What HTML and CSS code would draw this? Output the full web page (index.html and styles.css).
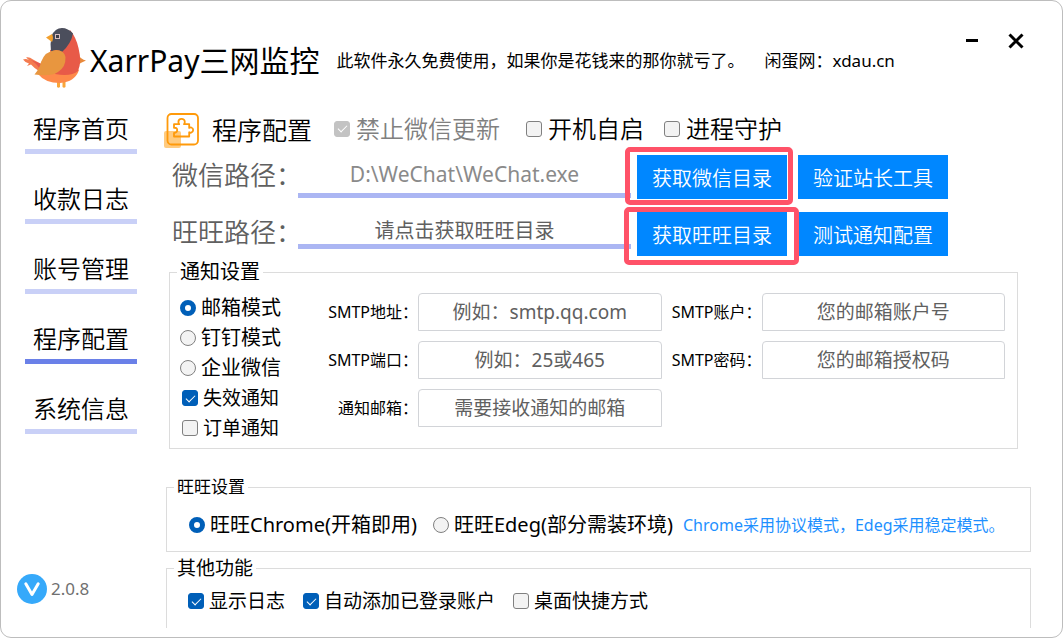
FILE: index.html
```html
<!DOCTYPE html>
<html lang="zh-CN">
<head>
<meta charset="utf-8">
<meta name="viewport" content="width=device-width, initial-scale=1">
<title>XarrPay三网监控</title>
<link rel="stylesheet" href="styles.css">
</head>
<body>
<div class="window">
  <header class="header">
    <svg class="logo" viewBox="0 0 64 70" aria-hidden="true">
      <path fill="#f9a63a" d="M34 54h3v7q-1.500 1.500-3 0zM39.500 54h3v7q-1.500 1.500-3 0z"/>
      <path fill="#f47b4f" d="M0 33.500Q3 32.500 6 34L3 31.500Q6 30.500 10 33.500L20 39L16 45Q11 42 8 38.500L4 40L6 37.500Q2 36.500 0 33.500z"/>
      <path fill="#e65a4d" d="M8 34L20 38.500L17 43Q13 37 8 34z"/>
      <path fill="#e88a3c" d="M54 27Q58 34 63 34.500Q58 36 54 40.500z"/>
      <path fill="#fe8a4a" d="M15 48Q22 57 37 57Q52 56 56 44L50 40z"/>
      <path fill="#e85a48" d="M47 4Q53 11 55.500 22Q59 36 55 45Q48 51 32 48L27 24Q39 23 47 4z"/>
      <path fill="#4b4e5c" d="M28 26Q27 17 28.500 10Q32 2 39 2Q45 2 50 7.500Q48 18 39 26Q33 22 28 26z"/>
      <path fill="#f2a02e" d="M29 8L23 11.500L29 16Q31 12 29 8z"/>
      <path fill="#e8963f" d="M11.500 48.500Q17 42 18 36Q22 25 33 24Q41 24 42.500 31Q43 41 35 46Q28 51 11.500 48.500z"/>
      <rect x="32.500" y="8.500" width="4" height="4" fill="#3b3c46" stroke="#d8bfc2" stroke-width="1"/>
    </svg>
    <h1 class="title">XarrPay三网监控</h1>
    <p class="notice"><span>此软件永久免费使用，如果你是花钱来的那你就亏了。</span><span>闲蛋网：xdau.cn</span></p>
    <div class="controls">
      <button class="control" type="button" aria-label="最小化"><svg viewBox="0 0 16 16"><path d="M2 7.500h12"/></svg></button>
      <button class="control" type="button" aria-label="关闭"><svg viewBox="0 0 16 16"><path d="M1.500 1.500l13 13M14.500 1.500l-13 13"/></svg></button>
    </div>
  </header>

  <div class="body">
    <aside class="sidebar">
      <nav class="nav">
        <a class="nav-link" href="#home">程序首页</a>
        <a class="nav-link" href="#logs">收款日志</a>
        <a class="nav-link" href="#accounts">账号管理</a>
        <a class="nav-link nav-link-active" href="#config">程序配置</a>
        <a class="nav-link" href="#info">系统信息</a>
      </nav>
      <div class="version">
        <svg class="version-icon" viewBox="0 0 30 30" aria-hidden="true"><circle cx="15" cy="15" r="15" fill="#36a9fa"/><path d="M8.800 9.800L15 20.500l6.200-10.700" fill="none" stroke="#fff" stroke-width="3" stroke-linecap="round" stroke-linejoin="round"/></svg>
        <span>2.0.8</span>
      </div>
    </aside>

    <main class="main">
      <div class="toolbar">
        <svg class="plugin-icon" viewBox="0 0 36 36" aria-hidden="true">
          <rect x="0" y="19" width="17" height="17" rx="2" fill="#ffcb80"/>
          <rect x="3.500" y="2" width="30.500" height="30.500" rx="4" fill="none" stroke="#ff9a0a" stroke-width="1.800"/>
          <path d="M10 12.200h5.200q-.8-1.200-.8-2.200a3.200 3.200 0 0 1 6.400 0q0 1-.8 2.200h5.200v3.700q1-.6 2-.4a2.700 2.700 0 0 1 0 5.200q-1 .2-2-.4v4.200H10v-3.600q3 .2 3.200-2.600t-3.200-2.500z" fill="none" stroke="#ff9a0a" stroke-width="1.800" stroke-linejoin="round"/>
        </svg>
        <h2 class="heading">程序配置</h2>
        <div class="switches">
          <label class="option option-large option-disabled"><input class="check" type="checkbox" checked disabled>禁止微信更新</label>
          <label class="option option-large"><input class="check" type="checkbox">开机自启</label>
          <label class="option option-large"><input class="check" type="checkbox">进程守护</label>
        </div>
      </div>

      <div class="paths">
        <div class="path-row">
          <label class="path-label" for="wechat-path">微信路径：</label>
          <input class="path-input path-value" id="wechat-path" type="text" value="D:\WeChat\WeChat.exe">
          <div class="actions">
            <span class="marked marked-wechat"><button class="button" type="button">获取微信目录</button></span>
            <button class="button" type="button">验证站长工具</button>
          </div>
        </div>
        <div class="path-row">
          <label class="path-label" for="wangwang-path">旺旺路径：</label>
          <input class="path-input path-empty" id="wangwang-path" type="text" placeholder="请点击获取旺旺目录">
          <div class="actions">
            <span class="marked marked-wangwang"><button class="button" type="button">获取旺旺目录</button></span>
            <button class="button" type="button">测试通知配置</button>
          </div>
        </div>
      </div>

      <fieldset class="group group-notify">
        <legend class="legend legend-large">通知设置</legend>
        <div class="notify">
          <div class="modes">
            <label class="option"><input class="radio" type="radio" name="mode" checked>邮箱模式</label>
            <label class="option"><input class="radio" type="radio" name="mode">钉钉模式</label>
            <label class="option"><input class="radio" type="radio" name="mode">企业微信</label>
            <label class="option option-small option-inset"><input class="check" type="checkbox" checked>失效通知</label>
            <label class="option option-small option-inset"><input class="check" type="checkbox">订单通知</label>
          </div>
          <div class="fields">
            <label class="field-label" for="smtp-host">SMTP地址：</label>
            <input class="field" id="smtp-host" type="text" placeholder="例如：smtp.qq.com">
            <label class="field-label" for="smtp-user">SMTP账户：</label>
            <input class="field" id="smtp-user" type="text" placeholder="您的邮箱账户号">
            <label class="field-label" for="smtp-port">SMTP端口：</label>
            <input class="field" id="smtp-port" type="text" placeholder="例如：25或465">
            <label class="field-label" for="smtp-pass">SMTP密码：</label>
            <input class="field" id="smtp-pass" type="text" placeholder="您的邮箱授权码">
            <label class="field-label" for="mail-to">通知邮箱：</label>
            <input class="field" id="mail-to" type="text" placeholder="需要接收通知的邮箱">
          </div>
        </div>
      </fieldset>

      <fieldset class="group group-wangwang">
        <legend class="legend">旺旺设置</legend>
        <div class="choices">
          <label class="option"><input class="radio" type="radio" name="browser" checked>旺旺Chrome(开箱即用)</label>
          <label class="option"><input class="radio" type="radio" name="browser">旺旺Edeg(部分需装环境)</label>
          <span class="hint">Chrome采用协议模式，Edeg采用稳定模式。</span>
        </div>
      </fieldset>

      <fieldset class="group group-other">
        <legend class="legend legend-medium">其他功能</legend>
        <div class="choices choices-wide">
          <label class="option option-small"><input class="check" type="checkbox" checked>显示日志</label>
          <label class="option option-small"><input class="check" type="checkbox" checked>自动添加已登录账户</label>
          <label class="option option-small"><input class="check" type="checkbox">桌面快捷方式</label>
        </div>
      </fieldset>
    </main>
  </div>
</div>
</body>
</html>
```
FILE: styles.css
```css
* {
  box-sizing: border-box;
}

body {
  margin: 0;
  background: #fff;
  color: #000;
  font-family: "Noto Sans", "Noto Sans CJK SC", sans-serif;
  font-weight: 400;
}

button,
input {
  margin: 0;
  font-family: inherit;
  font-weight: inherit;
}

.window {
  display: flex;
  flex-direction: column;
  min-height: 100vh;
  border: 1px solid #bdbdbd;
  border-radius: 11px;
  background: #fff;
}

/* Header */
.header {
  display: flex;
  align-items: center;
  padding: 25px 24px 0 22px;
}

.logo {
  flex: none;
  width: 64px;
  height: 70px;
}

.title {
  margin: 0 0 0 3px;
  font-size: 30px;
  font-weight: 400;
  line-height: 40px;
  white-space: nowrap;
}

.notice {
  display: flex;
  gap: 20px;
  margin: 0 0 0 17px;
  font-size: 17px;
  line-height: 24px;
  white-space: nowrap;
}

.controls {
  display: flex;
  align-self: flex-start;
  margin-left: auto;
}

.control {
  display: flex;
  align-items: center;
  justify-content: center;
  width: 44px;
  height: 30px;
  padding: 0;
  border: 0;
  background: none;
}

.control svg {
  width: 16px;
  height: 16px;
  fill: none;
  stroke: #000;
  stroke-width: 3;
}

/* Layout */
.body {
  display: flex;
  flex: 1;
  gap: 27px;
  padding: 0 31px 9px 16px;
}

.sidebar {
  display: flex;
  flex: none;
  flex-direction: column;
  width: 120px;
  padding: 15px 0 24px;
}

.main {
  flex: 1;
  min-width: 0;
  padding-top: 16px;
}

/* Navigation */
.nav {
  display: flex;
  flex-direction: column;
  gap: 27px;
  margin-left: 8px;
}

.nav-link {
  padding-bottom: 2px;
  border-bottom: 5px solid #c9d0f7;
  color: #000;
  font-size: 24px;
  font-weight: 350;
  line-height: 36px;
  text-align: center;
  text-decoration: none;
}

.nav-link-active {
  border-bottom-color: #6a80e8;
}

.version {
  display: flex;
  align-items: center;
  gap: 4px;
  margin-top: auto;
  color: #707070;
  font-size: 17px;
  line-height: 30px;
}

.version-icon {
  width: 30px;
  height: 30px;
}

/* Options */
.option {
  display: flex;
  align-items: center;
  gap: 5px;
  font-size: 20px;
  line-height: 30px;
  white-space: nowrap;
}

.option-small {
  font-size: 19px;
}

.option-large {
  gap: 6px;
  font-size: 24px;
  font-weight: 350;
}

.option-inset {
  padding-left: 2px;
}

.option-disabled {
  color: #808080;
}

.check,
.radio {
  display: grid;
  flex: none;
  place-items: center;
  width: 16px;
  height: 16px;
  border: 1px solid #808080;
  background: #f3f3f3;
  appearance: none;
}

.check {
  border-radius: 3px;
}

.radio {
  border-radius: 50%;
}

.radio:checked {
  border: 5px solid #005fb8;
  background: #fff;
}

.check:checked {
  border-color: #005fb8;
  background: #005fb8;
}

.check:checked:disabled {
  border-color: #c3c3c3;
  background: #c3c3c3;
}

.check:checked::after {
  width: 8px;
  height: 4px;
  margin-bottom: 2px;
  border: solid #fff;
  border-width: 0 0 1px 1px;
  content: "";
  transform: rotate(-45deg);
}

/* Toolbar */
.toolbar {
  display: flex;
  align-items: center;
  height: 36px;
}

.plugin-icon {
  flex: none;
  width: 36px;
  height: 36px;
}

.heading {
  margin: 0 22px 0 12px;
  font-size: 25px;
  font-weight: 350;
  line-height: 36px;
  white-space: nowrap;
}

.switches {
  display: grid;
  grid-template-columns: 192px 138px auto;
  padding-bottom: 3px;
}

/* Paths */
.paths {
  display: grid;
  gap: 13px;
  padding: 7px 83px 0 8px;
}

.path-row {
  display: grid;
  grid-template-columns: 126px 1fr auto;
  align-items: start;
}

.path-label {
  color: #606060;
  font-size: 26px;
  font-weight: 350;
  line-height: 40px;
  white-space: nowrap;
}

.path-input {
  width: 100%;
  min-width: 0;
  padding: 0;
  border: 0;
  border-bottom: 5px solid #abb6f3;
  background: none;
  text-align: center;
}

.path-value {
  height: 43px;
  color: #8a8a8a;
  font-size: 21px;
}

.path-empty {
  height: 37px;
  padding-top: 5px;
  font-size: 20px;
}

.path-input::placeholder,
.field::placeholder {
  color: #606060;
  opacity: 1;
}

.actions {
  display: flex;
  gap: 11px;
  padding-left: 6px;
}

.button {
  display: block;
  width: 150px;
  height: 44px;
  padding: 0;
  border: 0;
  background: #0087ff;
  color: #fff;
  font-size: 20px;
  font-weight: 350;
  white-space: nowrap;
}

.marked {
  position: relative;
}

.marked::after {
  position: absolute;
  z-index: 1;
  border: 5px solid #ff5268;
  border-radius: 5px;
  content: "";
  pointer-events: none;
}

.marked-wechat::after {
  inset: -8px -6px -6px -12px;
}

.marked-wangwang::after {
  inset: -5px -12px -9px -13px;
}

/* Groups */
.group {
  min-width: 0;
  margin: 0;
  border: 1px solid #dcdcdc;
}

.group-notify {
  margin: 4px 13px 0 5px;
  padding: 9px 12px 5px 7px;
}

.group-wangwang {
  margin: 26px 0 0 2px;
  padding: 11px 7px;
}

.group-other {
  margin: 4px 0 0 2px;
  padding: 6px 7px 12px;
  border-bottom: 0;
}

.legend {
  padding: 0 3px;
  font-size: 17px;
  line-height: 24px;
}

.legend-medium {
  font-size: 19px;
}

.legend-large {
  font-size: 20px;
}

.notify {
  display: flex;
  gap: 47px;
  padding-left: 3px;
}

.modes {
  flex: none;
}

.fields {
  display: grid;
  flex: 1;
  grid-template-columns: 90px 1fr 100px 1fr;
  row-gap: 10px;
  align-content: start;
  align-items: center;
}

.field-label {
  justify-self: end;
  font-size: 16px;
  line-height: 24px;
  white-space: nowrap;
}

.field {
  width: 100%;
  min-width: 0;
  height: 38px;
  padding: 0;
  border: 1px solid #d2d4d8;
  border-radius: 4px 4px 0 0;
  background: #fff;
  font-size: 19px;
  text-align: center;
}

.choices {
  display: flex;
  gap: 16px;
  padding-left: 15px;
}

.choices-wide {
  gap: 18px;
  padding-left: 14px;
}

.hint {
  margin-left: -6px;
  color: #1e90ff;
  font-size: 16px;
  line-height: 30px;
  white-space: nowrap;
}
```
